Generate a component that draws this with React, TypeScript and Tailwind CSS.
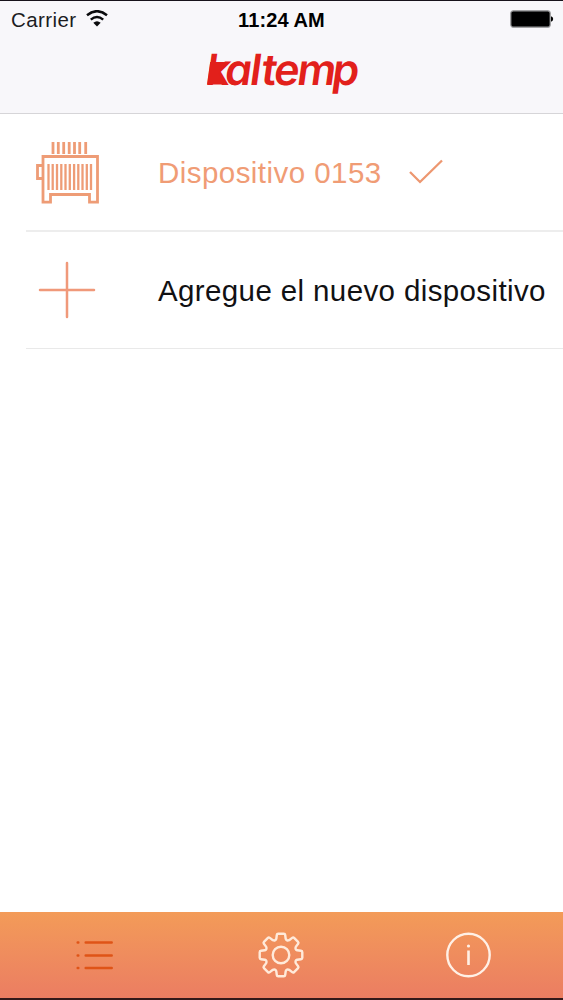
import type { ReactNode } from "react";

function gearPath() {
  const parts: string[] = [];
  const point = (r: number, half: number, angle: number) => {
    const c = Math.cos(angle);
    const s = Math.sin(angle);
    return `${(24 + half * c + r * s).toFixed(2)} ${(24 + half * s - r * c).toFixed(2)}`;
  };
  for (let i = 0; i < 8; i++) {
    const a = (i * Math.PI) / 4;
    parts.push(`${i === 0 ? "M" : "Q" + point(14.9, 0, a - Math.PI / 8) + " "}${point(16.2, -4.7, a)}`);
    parts.push(`L${point(20, -4.2, a)} Q${point(21.3, -4, a)} ${point(21.3, -2.8, a)}`);
    parts.push(`L${point(21.3, 2.8, a)} Q${point(21.3, 4, a)} ${point(20, 4.2, a)} L${point(16.2, 4.7, a)}`);
  }
  parts.push(`Q${point(14.9, 0, -Math.PI / 8)} ${point(16.2, -4.7, 0)}Z`);
  return parts.join(" ");
}

function Wifi() {
  return (
    <svg className="ml-[10px] mt-[9px] h-[18px] w-[22px]" viewBox="0 0 22 18" fill="none" stroke="#0b0b0d" strokeWidth="2.5">
      <path d="M1 5.2Q11 -2.8 21 5.2" />
      <path d="M4.8 9.6Q11 4.4 17.2 9.6" />
      <path d="M7.3 12.8Q11 9.6 14.7 12.8L11 16.6Z" fill="#0b0b0d" stroke="none" />
    </svg>
  );
}

function StatusBar() {
  return (
    <div className="grid h-[38px] grid-cols-3 text-[20.5px] leading-[38px] text-[#1c1c1f]">
      <div className="flex pl-[11px]">
        <span className="tracking-[0.4px]">Carrier</span>
        <Wifi />
      </div>
      <div className="text-center text-[20px] font-bold tracking-[0.1px] text-black">11:24 AM</div>
      <div className="flex justify-end pr-[9px] pt-[9px]">
        <svg width="44" height="18" viewBox="0 0 44 18">
          <rect x="0.8" y="0.8" width="39.4" height="16.4" rx="2.5" fill="#000" stroke="#9b9b9d" strokeWidth="1.2" />
          <path d="M41 6.3Q43.2 6.8 43.2 9T41 11.7Z" fill="#000" />
        </svg>
      </div>
    </div>
  );
}

function Logo() {
  return (
    <svg className="mx-auto block overflow-visible" width="163" height="64" viewBox="200 41 163 64" fill="#e2201b">
      <g transform="translate(206 84.5) skewX(-8)">
        <text
          x="-1.5 17.5 42.5 54 66.5 89.8 124.8"
          y="0"
          fontFamily="Inter, sans-serif"
          fontSize="43"
          fontWeight="600"
          style={{ fontFeatureSettings: "'cv11' 1" }}
        >
          kaltemp
        </text>
        <path d="M1 -22.5L18.5 -22.5L11 -12L18.5 0L1 0Z" />
      </g>
    </svg>
  );
}

function Heater() {
  return (
    <svg width="64" height="64" viewBox="36 141 64 64" fill="none" stroke="#ee9c76" strokeWidth="2.8">
      <path d="M43 156.5H97.5V202.2H89.5V194.5H50.5V202.2H43Z" />
      <path d="M43 165.5H37.5V178.5H43" />
      {[53, 58.3, 63.7, 69.2, 74.5, 79.7, 85.7].map((x) => (
        <path key={x} d={`M${x} 142V154`} />
      ))}
      {[48.5, 52.7, 57, 61.3, 65.5, 69.8, 74.1, 78.3, 82.5, 86.8, 91].map((x) => (
        <path key={x} d={`M${x} 164V190`} strokeWidth="2.3" />
      ))}
    </svg>
  );
}

function Row({ icon, children, className }: { icon: ReactNode; children: ReactNode; className: string }) {
  return (
    <div className={`flex items-center ${className}`}>
      <div className="flex w-[132px] shrink-0">{icon}</div>
      {children}
    </div>
  );
}

export default function App() {
  return (
    <div className="flex h-[1000px] w-[563px] flex-col overflow-hidden border-b-2 border-[#33191a] bg-white font-['Liberation_Sans',Arial,sans-serif]">
      <header className="h-[114px] border-b border-t border-b-[#d6d5d8] border-t-[#17121a] bg-[#f8f7fa]">
        <StatusBar />
        <div className="mt-[2px]">
          <Logo />
        </div>
      </header>
      <main className="flex-1">
        <Row
          className="ml-[26px] h-[118px] border-b-2 border-[#ededed]"
          icon={<div className="ml-[10px] mt-[1px]"><Heater /></div>}
        >
          <span className="whitespace-nowrap pt-[2px] text-[29.5px] tracking-[0.45px] text-[#f09c75]">Dispositivo 0153</span>
          <svg className="ml-[27.5px]" width="34" height="26" viewBox="0 0 34 26" fill="none" stroke="#ed9770" strokeWidth="2.3">
            <path d="M1 13L11 23L33 1.5" />
          </svg>
        </Row>
        <Row
          className="ml-[26px] h-[117px] border-b border-[#e9e9e9]"
          icon={
            <svg className="ml-[12px]" width="58" height="58" viewBox="0 0 58 58" stroke="#f0997a" strokeWidth="2.5" strokeLinecap="round">
              <path d="M2 29H56M29 2V56" />
            </svg>
          }
        >
          <span className="whitespace-nowrap pt-[2px] text-[29.5px] tracking-[0.38px] text-[#111113]">Agregue el nuevo dispositivo</span>
        </Row>
      </main>
      <nav className="grid h-[86px] grid-cols-3 items-center bg-linear-to-b from-[#f39b58] to-[#eb7d62]">
        <svg className="mx-auto" width="38" height="32" viewBox="-0.7 -0.5 38 32" stroke="#df5417" strokeWidth="2.5" strokeLinecap="round">
          <path d="M10 3H36M10 16H36M10 28.5H36" />
          <path d="M2 3H2.6M2 16H2.6M2 28.5H2.6" />
        </svg>
        <svg className="mx-auto" width="48" height="48" viewBox="0 0 48 48" fill="none" stroke="#ffeada" strokeWidth="2.4" strokeLinejoin="round">
          <path d={gearPath()} />
          <circle cx="24" cy="24" r="8.3" />
        </svg>
        <svg className="mx-auto" width="48" height="48" viewBox="0.5 0 48 48" fill="none" stroke="#fff0e6" strokeWidth="2.4">
          <circle cx="24" cy="24" r="21.2" />
          <path d="M24 19.5V34" strokeWidth="2.6" />
          <circle cx="24" cy="15" r="1.6" fill="#fff0e6" stroke="none" />
        </svg>
      </nav>
    </div>
  );
}
